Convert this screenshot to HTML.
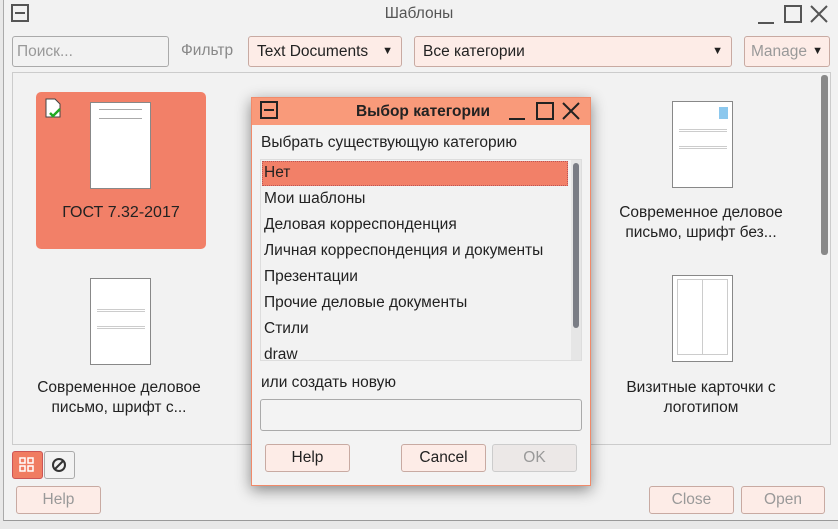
<!DOCTYPE html><html><head><meta charset="utf-8"><style>
*{box-sizing:border-box;margin:0;padding:0}
body{width:838px;height:529px;background:#e8e8e8;font-family:"Liberation Sans","DejaVu Sans",sans-serif;font-size:15.5px;color:#222;position:relative;overflow:hidden}
.a{position:absolute}
.win{left:3px;top:0;width:835px;height:521px;background:#f2f2f2;border-left:1px solid #aaa;border-bottom:1px solid #999}
.btn{position:absolute;background:#fdece7;border:1px solid #c8aaa2;border-radius:3px;text-align:center;line-height:26px;color:#222}
.dis{color:#999}
.thumb{position:absolute;width:61px;height:87px;background:#fff;border:1px solid #888}
.cap{position:absolute;text-align:center;line-height:20px;font-size:15.5px;color:#222}
</style></head><body>
<div class="a win"></div>
<svg class="a" style="left:11px;top:4px" width="18" height="18"><rect x="1" y="1" width="16" height="16" fill="none" stroke="#555" stroke-width="2"/><line x1="4" y1="9" x2="14" y2="9" stroke="#555" stroke-width="2"/></svg>
<div class="a" style="left:0;width:838px;top:5px;text-align:center;color:#555">Шаблоны</div>
<svg class="a" style="left:755px;top:3px" width="78" height="22" stroke="#555" stroke-width="2" fill="none"><line x1="3" y1="20" x2="19" y2="20"/><rect x="30" y="3" width="16" height="16"/><path d="M56 3L72 19M72 3L56 19"/></svg>
<div class="a" style="left:12px;top:36px;width:157px;height:31px;border:1px solid #aaa;border-radius:3px;background:#f2f2f2;color:#999;padding:6px 4px">Поиск...</div>
<div class="a" style="left:181px;top:42px;color:#888">Фильтр</div>
<div class="btn" style="left:248px;top:36px;width:154px;height:31px;line-height:29px;text-align:left;padding-left:8px">Text Documents <span style="position:absolute;right:8px;font-size:11px">▼</span></div>
<div class="btn" style="left:414px;top:36px;width:318px;height:31px;line-height:29px;text-align:left;padding-left:8px">Все категории<span style="position:absolute;right:8px;font-size:11px">▼</span></div>
<div class="btn dis" style="left:744px;top:36px;width:86px;height:31px;line-height:29px;text-align:left;padding-left:6px">Manage<span style="position:absolute;right:6px;font-size:11px;color:#222">▼</span></div>
<div class="a" style="left:12px;top:72px;width:819px;height:373px;border:1px solid #ccc"></div>
<div class="a" style="left:821px;top:75px;width:7px;height:180px;background:#888;border-radius:3px"></div>
<div class="a" style="left:36px;top:92px;width:170px;height:157px;background:#f28068;border-radius:5px"></div>
<svg class="a" style="left:44px;top:98px" width="20" height="22"><path d="M2 1h9l5 5v13H2z" fill="#fff" stroke="#444"/><path d="M6 15l3 3 7-7" stroke="#2a2" stroke-width="2.5" fill="none"/></svg>
<div class="thumb" style="left:90px;top:102px"><div class="a" style="left:8px;top:6px;width:43px;height:10px;border-top:1px solid #aaa;border-bottom:1px solid #aaa"></div></div>
<div class="cap" style="left:36px;width:170px;top:203px;font-size:16px">ГОСТ 7.32-2017</div>
<div class="thumb" style="left:672px;top:101px"><div class="a" style="left:46px;top:5px;width:9px;height:12px;background:#8cc8ee"></div><div class="a" style="left:6px;top:27px;width:48px;height:20px;border-top:3px double #ccc;border-bottom:3px double #ccc"></div></div>
<div class="cap" style="left:601px;width:200px;top:203px">Современное деловое<br>письмо, шрифт без...</div>
<div class="thumb" style="left:90px;top:278px"><div class="a" style="left:6px;top:30px;width:48px;height:20px;border-top:3px double #ccc;border-bottom:3px double #ccc"></div></div>
<div class="cap" style="left:19px;width:200px;top:378px">Современное деловое<br>письмо, шрифт с...</div>
<div class="thumb" style="left:672px;top:275px"><div class="a" style="left:4px;top:3px;width:51px;height:76px;border:1px solid #ccc;background:linear-gradient(90deg,transparent 49%,#ccc 49%,#ccc 51%,transparent 51%)"></div></div>
<div class="cap" style="left:601px;width:200px;top:378px">Визитные карточки с<br>логотипом</div>
<div class="a" style="left:12px;top:451px;width:31px;height:28px;background:#f07c62;border:1px solid #c55;border-radius:3px"></div>
<svg class="a" style="left:19px;top:457px" width="16" height="16" fill="none" stroke="#fff" stroke-width="1.5"><rect x="1" y="1" width="5" height="5"/><rect x="9" y="1" width="5" height="5"/><rect x="1" y="9" width="5" height="5"/><rect x="9" y="9" width="5" height="5"/></svg>
<div class="a" style="left:44px;top:451px;width:31px;height:28px;border:1px solid #aaa;border-radius:3px"></div>
<svg class="a" style="left:51px;top:457px" width="16" height="16" fill="none" stroke="#333" stroke-width="2"><circle cx="8" cy="8" r="6"/><line x1="4" y1="12" x2="12" y2="4"/></svg>
<div class="btn dis" style="left:16px;top:486px;width:85px;height:28px">Help</div>
<div class="btn dis" style="left:649px;top:486px;width:85px;height:28px">Close</div>
<div class="btn dis" style="left:741px;top:486px;width:84px;height:28px">Open</div>
<!-- dialog -->
<div class="a" style="left:251px;top:97px;width:340px;height:389px;background:#f3f3f3;border:1px solid #f08a6a;box-shadow:0 4px 14px rgba(0,0,0,.45)"></div>
<div class="a" style="left:252px;top:98px;width:338px;height:27px;background:#f99a7a"></div>
<svg class="a" style="left:260px;top:101px" width="18" height="18"><rect x="1" y="1" width="16" height="16" fill="none" stroke="#222" stroke-width="2"/><line x1="4" y1="9" x2="14" y2="9" stroke="#222" stroke-width="2"/></svg>
<div class="a" style="left:340px;width:166px;top:103px;text-align:center;font-weight:bold;color:#222">Выбор категории</div>
<svg class="a" style="left:507px;top:100px" width="78" height="22" stroke="#222" stroke-width="2" fill="none"><line x1="2" y1="19" x2="18" y2="19"/><rect x="30" y="3" width="16" height="16"/><path d="M56 3L72 19M72 3L56 19"/></svg>
<div class="a" style="left:261px;top:134px">Выбрать существующую категорию</div>
<div class="a" style="left:260px;top:159px;width:322px;height:202px;border:1px solid #ddd;background:#f2f2f2"></div>
<div class="a" style="left:571px;top:160px;width:10px;height:200px;background:#e6e6e6"></div>
<div class="a" style="left:573px;top:163px;width:6px;height:165px;background:#7a7d85;border-radius:3px"></div>
<div class="a" style="left:262px;top:161px;width:306px;height:25px;background:#f28068;border:1px dotted #b55"></div>
<div class="a" style="left:260px;top:161px;width:322px;height:199px;overflow:hidden">
<div class="a" style="left:4px;top:3px">Нет</div>
<div class="a" style="left:4px;top:29px">Мои шаблоны</div>
<div class="a" style="left:4px;top:55px">Деловая корреспонденция</div>
<div class="a" style="left:4px;top:81px">Личная корреспонденция и документы</div>
<div class="a" style="left:4px;top:107px">Презентации</div>
<div class="a" style="left:4px;top:133px">Прочие деловые документы</div>
<div class="a" style="left:4px;top:159px">Стили</div>
<div class="a" style="left:4px;top:185px">draw</div>
</div>
<div class="a" style="left:261px;top:374px">или создать новую</div>
<div class="a" style="left:260px;top:399px;width:322px;height:32px;border:1px solid #aaa;border-radius:3px"></div>
<div class="btn" style="left:265px;top:444px;width:85px;height:28px">Help</div>
<div class="btn" style="left:401px;top:444px;width:85px;height:28px">Cancel</div>
<div class="btn dis" style="left:492px;top:444px;width:85px;height:28px;background:#ece8e7;border-color:#ccc">OK</div>
</body></html>
